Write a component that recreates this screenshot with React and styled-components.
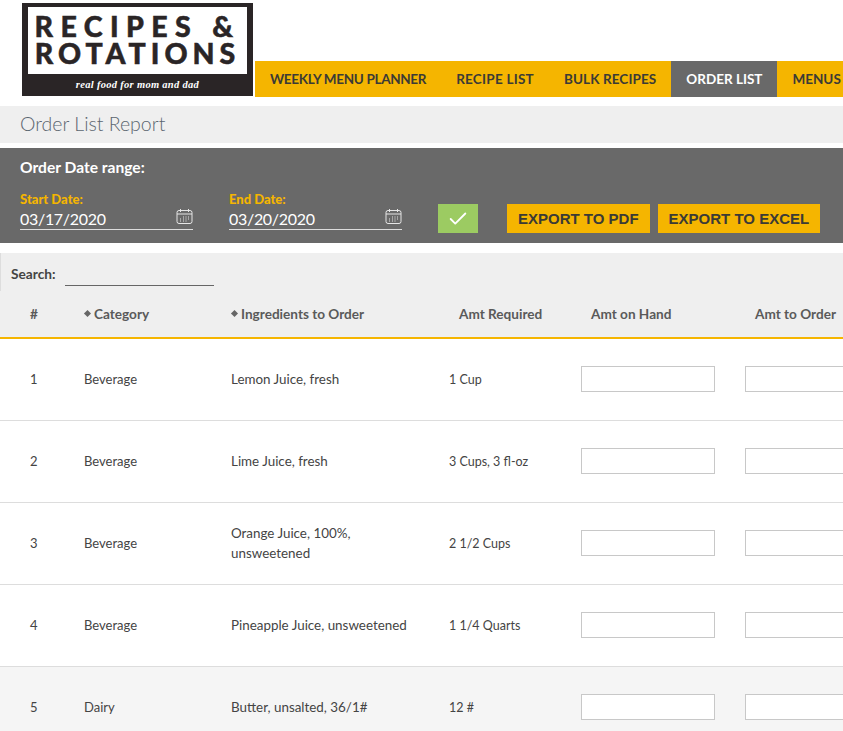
import React from "react";
import styled, { createGlobalStyle } from "styled-components";
import { Check } from "lucide-react";

const GlobalStyle = createGlobalStyle`
  html, body {
    margin: 0;
    padding: 0;
    background: #fff;
    overflow: hidden;
  }
  body {
    font-family: "Lato", "Noto Sans", sans-serif;
    color: #444;
  }
`;

const Page = styled.div`
  width: 843px;
  height: 731px;
  overflow: hidden;
`;

const Header = styled.header`
  display: flex;
  align-items: flex-end;
  gap: 2px;
  height: 97px;
  padding-left: 22px;
`;

const Logo = styled.div`
  flex: none;
  width: 231px;
  height: 93px;
  margin-bottom: 1px;
  padding: 4px 6px 0;
  box-sizing: border-box;
  background: #2a2526;
  display: flex;
  flex-direction: column;
  align-items: center;
`;

const LogoBox = styled.div`
  width: 100%;
  height: 67px;
  padding-bottom: 1px;
  box-sizing: border-box;
  background: #fff;
  display: flex;
  flex-direction: column;
  align-items: center;
  justify-content: center;
`;

const LogoLine = styled.div`
  font-family: "Lato", sans-serif;
  font-weight: 900;
  font-size: 28.5px;
  line-height: 27px;
  letter-spacing: ${(p) => p.$spacing}px;
  -webkit-text-stroke: 0.5px #2a2526;
  color: #2a2526;
  white-space: nowrap;
`;

const Tagline = styled.div`
  font-family: "Liberation Serif", serif;
  font-style: italic;
  font-weight: 700;
  font-size: 10.5px;
  line-height: 21px;
  letter-spacing: 0.3px;
  color: #fff;
  white-space: nowrap;
`;

const Nav = styled.nav`
  flex: 1;
  display: flex;
  min-width: 0;
  height: 36px;
  background: #f5b500;
  overflow: hidden;
`;

const NavItem = styled.a`
  flex: none;
  display: flex;
  align-items: center;
  padding: 0 15px 1px;
  font-size: 13.5px;
  font-weight: 700;
  letter-spacing: ${(p) => p.$tracking}px;
  text-transform: uppercase;
  white-space: nowrap;
  color: ${(p) => (p.$active ? "#fff" : "#3b3a36")};
  background: ${(p) => (p.$active ? "#696969" : "transparent")};
`;

const TitleBar = styled.div`
  margin-top: 9px;
  height: 37px;
  box-sizing: border-box;
  padding: 0 0 3px 20px;
  background: #efefef;
  display: flex;
  align-items: center;
`;

const Title = styled.h1`
  margin: 0;
  font-size: 19.5px;
  font-weight: 300;
  color: #5b6670;
`;

const DatePanel = styled.section`
  margin-top: 5px;
  height: 95px;
  box-sizing: border-box;
  padding: 9px 20px 0;
  background: #696969;
`;

const PanelHeading = styled.div`
  font-size: 15.6px;
  line-height: 20px;
  font-weight: 700;
  color: #fff;
`;

const FilterRow = styled.div`
  display: flex;
  align-items: flex-end;
  margin-top: 17px;
`;

const DateField = styled.div`
  flex: none;
  width: 173px;
  margin: 0 36px 3px 0;
  border-bottom: 1px solid #ddd;
`;

const DateLabel = styled.div`
  font-size: 13px;
  line-height: 10px;
  font-weight: 900;
  color: #f5b500;
`;

const DateValue = styled.div`
  display: flex;
  align-items: center;
  justify-content: space-between;
  height: 25px;
  box-sizing: border-box;
  padding-top: 4px;
  font-size: 16px;
  letter-spacing: -0.3px;
  color: #fff;
`;

const CalendarSvg = styled.svg`
  width: 17px;
  height: 17px;
  margin-top: -5px;
  flex: none;
`;

const GoButton = styled.button`
  flex: none;
  width: 40px;
  height: 29px;
  margin: 0 29px 0 0;
  padding: 0;
  border: 0;
  background: #9ccb62;
  color: #fff;
  display: flex;
  align-items: center;
  justify-content: center;
`;

const ExportButton = styled.button`
  flex: none;
  height: 29px;
  margin: 0 8px 0 0;
  padding: 0 11px;
  border: 0;
  background: #f5b500;
  color: #3b3a36;
  font-family: "Liberation Sans", Arial, sans-serif;
  font-size: 15px;
  font-weight: 700;
  white-space: nowrap;
`;

const TableTop = styled.div`
  margin-top: 10px;
  height: 86px;
  box-sizing: border-box;
  background: #efefef;
  border-bottom: 2px solid #f5b500;
`;

const SearchRow = styled.div`
  display: flex;
  align-items: flex-end;
  height: 38px;
  box-sizing: border-box;
  padding-left: 11px;
  border-left: 1px solid #ddd;
`;

const SearchLabel = styled.label`
  font-size: 13.7px;
  font-weight: 700;
  color: #444;
  line-height: 28px;
  margin: 0 9px 3px -1px;
`;

const SearchInput = styled.input`
  width: 149px;
  height: 22px;
  box-sizing: border-box;
  padding: 0;
  border: 0;
  border-bottom: 1px solid #666;
  background: transparent;
  outline: none;
  margin-bottom: 5px;
`;

const columns = "84px 147px 218px 132px 164px 164px";

const HeadRow = styled.div`
  display: grid;
  grid-template-columns: ${columns};
  height: 46px;
  box-sizing: border-box;
  padding-bottom: 1px;
  align-items: center;
`;

const HeadCell = styled.div`
  font-size: 13.6px;
  font-weight: 700;
  color: #5a5a5a;
  white-space: nowrap;
  padding-left: ${(p) => p.$pad || 0}px;
  display: flex;
  align-items: center;
  gap: 4px;
`;

const SortMark = styled.span`
  width: 5px;
  height: 5px;
  margin-left: 1px;
  background: #666;
  transform: rotate(45deg);
`;

const Row = styled.div`
  display: grid;
  grid-template-columns: ${columns};
  height: 82px;
  box-sizing: border-box;
  padding-bottom: 2px;
  align-items: center;
  border-bottom: 1px solid #ddd;
  background: ${(p) => (p.$shaded ? "#f5f5f5" : "#fff")};
`;

const Cell = styled.div`
  font-size: 13px;
  line-height: 20px;
  color: #444;
  padding-left: ${(p) => p.$pad || 0}px;
`;

const NameCell = styled(Cell)`
  font-size: 13.4px;
`;

const AmountCell = styled(Cell)`
  font-size: 12.5px;
  padding-top: 2px;
`;

const AmountInput = styled.input`
  width: 134px;
  height: 26px;
  box-sizing: border-box;
  padding: 0;
  border: 1px solid #c8c8c8;
  background: #fff;
  display: block;
`;

const navItems = [
  { label: "Weekly Menu Planner", tracking: -0.33 },
  { label: "Recipe List", tracking: 0.25 },
  { label: "Bulk Recipes", tracking: 0.1 },
  { label: "Order List", tracking: 0, active: true },
  { label: "Menus", tracking: 0 },
];

const rows = [
  { id: 1, category: "Beverage", name: "Lemon Juice, fresh", amount: "1 Cup" },
  { id: 2, category: "Beverage", name: "Lime Juice, fresh", amount: "3 Cups, 3 fl-oz" },
  { id: 3, category: "Beverage", name: <>Orange Juice, 100%,<br />unsweetened</>, amount: "2 1/2 Cups" },
  { id: 4, category: "Beverage", name: "Pineapple Juice, unsweetened", amount: "1 1/4 Quarts" },
  { id: 5, category: "Dairy", name: "Butter, unsalted, 36/1#", amount: "12 #", shaded: true },
];

function CalendarIcon() {
  return (
    <CalendarSvg viewBox="0 0 17 17" fill="none" stroke="#e6e6e6" strokeWidth="1">
      <rect x="1" y="2.5" width="15" height="13" rx="2" />
      <path d="M1 6h15M4.5 1v3M12.5 1v3" />
      <path d="M7 9h1M9.5 9h1M12 9h1M4 11h1M7 11h1M9.5 11h1M12 11h1M4 13h1M7 13h1M9.5 13h1" />
    </CalendarSvg>
  );
}

function DateInput({ label, value }) {
  return (
    <DateField>
      <DateLabel>{label}</DateLabel>
      <DateValue>
        {value}
        <CalendarIcon />
      </DateValue>
    </DateField>
  );
}

export default function App() {
  return (
    <Page>
      <GlobalStyle />
      <Header>
        <Logo>
          <LogoBox>
            <LogoLine $spacing={7.4}>RECIPES &amp;</LogoLine>
            <LogoLine $spacing={5}>ROTATIONS</LogoLine>
          </LogoBox>
          <Tagline>real food for mom and dad</Tagline>
        </Logo>
        <Nav>
          {navItems.map((item) => (
            <NavItem key={item.label} $active={item.active} $tracking={item.tracking}>
              {item.label}
            </NavItem>
          ))}
        </Nav>
      </Header>

      <TitleBar>
        <Title>Order List Report</Title>
      </TitleBar>

      <DatePanel>
        <PanelHeading>Order Date range:</PanelHeading>
        <FilterRow>
          <DateInput label="Start Date:" value="03/17/2020" />
          <DateInput label="End Date:" value="03/20/2020" />
          <GoButton>
            <Check size={22} strokeWidth={2} />
          </GoButton>
          <ExportButton>EXPORT TO PDF</ExportButton>
          <ExportButton>EXPORT TO EXCEL</ExportButton>
        </FilterRow>
      </DatePanel>

      <TableTop>
        <SearchRow>
          <SearchLabel>Search:</SearchLabel>
          <SearchInput />
        </SearchRow>
        <HeadRow>
          <HeadCell $pad={30}>#</HeadCell>
          <HeadCell><SortMark />Category</HeadCell>
          <HeadCell><SortMark />Ingredients to Order</HeadCell>
          <HeadCell $pad={10}>Amt Required</HeadCell>
          <HeadCell $pad={10}>Amt on Hand</HeadCell>
          <HeadCell $pad={10}>Amt to Order</HeadCell>
        </HeadRow>
      </TableTop>

      {rows.map((row) => (
        <Row key={row.id} $shaded={row.shaded}>
          <Cell $pad={30}>{row.id}</Cell>
          <Cell>{row.category}</Cell>
          <NameCell>{row.name}</NameCell>
          <AmountCell>{row.amount}</AmountCell>
          <Cell><AmountInput /></Cell>
          <Cell><AmountInput /></Cell>
        </Row>
      ))}
    </Page>
  );
}
